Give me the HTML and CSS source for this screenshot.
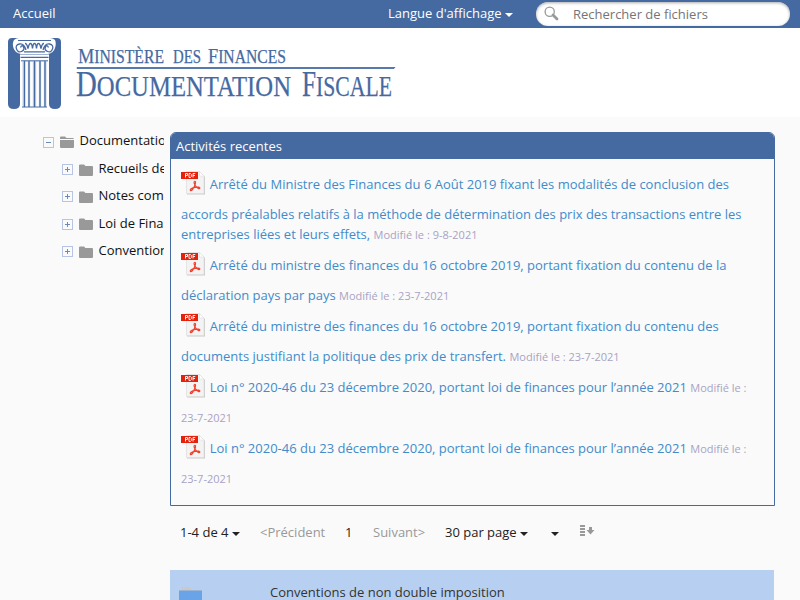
FILE: index.html
```html
<!DOCTYPE html>
<html lang="fr">
<head>
<meta charset="utf-8">
<title>Documentation Fiscale</title>
<link rel="stylesheet" href="styles.css">
</head>
<body>
<svg width="0" height="0" class="defs" aria-hidden="true">
  <symbol id="pdf" viewBox="0 0 24 24">
    <path d="M6 1h13l5 5v17.500H6z" fill="#c9c9c9"/>
    <path d="M5.500.5h13L23 5v17.500H5.500z" fill="#f3f3f3" stroke="#dedede" stroke-width=".8"/>
    <path d="M18.500.5 23 5h-4.500z" fill="#fff" stroke="#ddd" stroke-width=".6"/>
    <path d="M0 1h17v7H0z" fill="#e5200b"/>
    <path d="M4.500 6.500v-4h2v2h-2M8 2.500h1.500l.8.800v2.400l-.8.800H8zM12 6.500v-4h2.300M12 4.500h2" fill="none" stroke="#fff" stroke-width=".9"/>
    <path d="M13.500 10.500c1.500-.3 1.300 2-.2 5-1.300 2.700-2.800 4.600-3.800 4-1-.9 1.300-2.500 4.500-3.100 3-.6 5-.3 4.800.7-.4 1.300-3-.4-4.500-2.600-1.300-2-1.700-3.800-.8-4z" fill="none" stroke="#f0402f" stroke-width="1.200"/>
  </symbol>
  <symbol id="folder" viewBox="0 0 14 12">
    <path d="M0 1.500Q0 .5 1 .5h4l1.500 1.500H13q1 0 1 1V11q0 1-1 1H1q-1 0-1-1z" fill="#999"/>
  </symbol>
</svg>
<header class="topbar">
  <a class="home">Accueil</a>
  <a class="lang">Langue d'affichage<i class="caret"></i></a>
  <div class="search">
    <svg width="16" height="16" viewBox="0 0 16 16"><circle cx="5.700" cy="5.700" r="4.600" fill="none" stroke="#999" stroke-width="1.300"/><path d="M9 9l4 4" stroke="#999" stroke-width="2.800" stroke-linecap="round"/></svg>
    <span>Rechercher de fichiers</span>
  </div>
</header>
<div class="brand">
  <svg width="400" height="89" viewBox="0 0 400 89">
    <path d="M12 10h45q4 0 4 4v62q0 5-6 5t-6-5V26H20v50q0 5-6 5t-6-5V14q0-4 4-4z" fill="#4569a1"/>
    <path d="M20 24h29v9H20z" fill="#fff"/>
    <path d="M22.500 33.500h24v45h-24z" fill="#c5d3e8"/>
    <path d="M26.500 34v45M31.500 34v45M37.500 34v45M42.500 34v45" stroke="#fff" stroke-width="2.600"/>
    <path d="M24.500 33v46M29 33v46M34.500 33v46M40 33v46M45 33v46" stroke="#4569a1" stroke-width="1.300"/>
    <path d="M21 32.800h27M22 79h25" stroke="#4569a1" stroke-width="1"/>
    <path d="M15 10h39l3 4-1 9-6 3.500H20L14 23l-2-9z" fill="#4569a1"/>
    <path d="M14 12q2-2 5-2h31q3 0 5 2 1.500 3 0 8t-7 6H21q-6-1-7.500-6t.5-8z" fill="#fff"/>
    <path d="M18 12.500h33" stroke="#4569a1" stroke-width="1.200"/>
    <path d="M26 22q-2-7-6.500-6t-3 5 5 2.500 2-4.500-3 .5M43 22q2-7 6.500-6t3 5-5 2.500-2-4.500 3 .5" fill="none" stroke="#4569a1" stroke-width="1.300"/>
    <path d="M25 15.500q2 0 3 5 1-5 2.500-5t2 5q.5-5 2-5t2 5q.5-5 2-5t2.500 5q1-5 3-5" fill="none" stroke="#4569a1" stroke-width="1.400"/>
    <path d="M24 23.800h21M20.500 29.300h28" stroke="#4569a1" stroke-width="1.200"/>
    <g class="logo">
      <g class="upper">
        <text x="78" y="35" textLength="86" lengthAdjust="spacingAndGlyphs">M<tspan>INISTÈRE</tspan></text>
        <text x="173" y="35" textLength="28" lengthAdjust="spacingAndGlyphs"><tspan>DES</tspan></text>
        <text x="208" y="35" textLength="78" lengthAdjust="spacingAndGlyphs">F<tspan>INANCES</tspan></text>
      </g>
      <g class="lower">
        <text x="76" y="68" textLength="215" lengthAdjust="spacingAndGlyphs">D<tspan>OCUMENTATION</tspan></text>
        <text x="302" y="68" textLength="90" lengthAdjust="spacingAndGlyphs">F<tspan>ISCALE</tspan></text>
      </g>
    </g>
    <path d="M77 39.500h318l-1 1H77z" fill="#4569a1" stroke="#4569a1" stroke-width=".8"/>
  </svg>
</div>
<div class="layout">
  <nav class="tree">
    <div class="node root"><i class="toggle"></i><svg class="open" width="14" height="12" viewBox="0 0 14 12"><path d="M0 3V1.500Q0 .5 1 .5h4L6.500 2H13q.8 0 .8 1z" fill="#999"/><path d="M0 4h14v7q0 1-1 1H1q-1 0-1-1z" fill="#999"/></svg><span>Documentation</span></div>
    <div class="node"><i class="toggle plus"></i><svg width="14" height="12"><use href="#folder"/></svg><span>Recueils des</span></div>
    <div class="node"><i class="toggle plus"></i><svg width="14" height="12"><use href="#folder"/></svg><span>Notes communes</span></div>
    <div class="node"><i class="toggle plus"></i><svg width="14" height="12"><use href="#folder"/></svg><span>Loi de Finances</span></div>
    <div class="node"><i class="toggle plus"></i><svg width="14" height="12"><use href="#folder"/></svg><span>Conventions</span></div>
  </nav>
  <main>
    <section class="panel">
      <h2>Activités recentes</h2>
      <div class="items">
        <p><svg class="pdf" width="24" height="24"><use href="#pdf"/></svg><a>Arrêté du Ministre des Finances du 6 Août 2019 fixant les modalités de conclusion des<br>accords préalables relatifs à la méthode de détermination des prix des transactions entre les<br>entreprises liées et leurs effets,</a> <small>Modifié le : 9-8-2021</small></p>
        <p><svg class="pdf" width="24" height="24"><use href="#pdf"/></svg><a>Arrêté du ministre des finances du 16 octobre 2019, portant fixation du contenu de la<br>déclaration pays par pays</a> <small>Modifié le : 23-7-2021</small></p>
        <p><svg class="pdf" width="24" height="24"><use href="#pdf"/></svg><a>Arrêté du ministre des finances du 16 octobre 2019, portant fixation du contenu des<br>documents justifiant la politique des prix de transfert.</a> <small>Modifié le : 23-7-2021</small></p>
        <p><svg class="pdf" width="24" height="24"><use href="#pdf"/></svg><a>Loi n° 2020-46 du 23 décembre 2020, portant loi de finances pour l’année 2021</a> <small>Modifié le :<br>23-7-2021</small></p>
        <p><svg class="pdf" width="24" height="24"><use href="#pdf"/></svg><a>Loi n° 2020-46 du 23 décembre 2020, portant loi de finances pour l’année 2021</a> <small>Modifié le :<br>23-7-2021</small></p>
      </div>
    </section>
    <div class="pager">
      <span class="range">1-4 de 4<i class="caret"></i></span>
      <span class="prev">&lt;Précident</span>
      <span class="page">1</span>
      <span class="next">Suivant&gt;</span>
      <span class="size">30 par page<i class="caret"></i></span>
      <i class="caret more"></i>
      <svg class="sort" width="15" height="12" viewBox="0 0 15 12"><path d="M0 1h5M0 4h5M0 7h5M0 10h5" stroke="#999" stroke-width="2"/><path d="M9 2h3v3h2.500l-4 4.500-4-4.500H9z" fill="#999"/></svg>
    </div>
    <div class="row">
      <svg width="24" height="14" viewBox="0 0 24 14"><path d="M2 4q0-3 3-3h5q2 0 3 3h10v2H0V4z" fill="#c9c9c9"/><path d="M0 4.500h23V14H0z" fill="#69a3e8"/></svg>
      <span>Conventions de non double imposition</span>
    </div>
  </main>
</div>
</body>
</html>
```
FILE: styles.css
```css
* { box-sizing: border-box; }
html, body { height: 600px; overflow: hidden; }
body { margin: 0; background: #fafafa; color: #333; font: 13px/20px "Open Sans", "Noto Sans", sans-serif; white-space: nowrap; }
.defs { position: absolute; }
.topbar { display: flex; height: 28px; background: #4569a1; color: #fff; line-height: 26px; padding: 0 10px 0 13px; }
.home { width: 375px; }
.lang { width: 148px; }
.caret { display: inline-block; border: 4px solid transparent; border-top-color: currentColor; border-bottom: 0; margin-left: 3px; vertical-align: 1px; }
.search { display: flex; align-items: center; width: 254px; height: 24px; margin-top: 2px; padding-left: 8px; border-radius: 12px; background: #fff; color: #757575; box-shadow: inset 0 1px 3px #aaa; line-height: 24px; }
.search span { margin-left: 13px; }
.brand { height: 89px; background: #fff; }
.brand svg { display: block; }
.logo { font-family: "Liberation Serif", serif; fill: #4569a1; stroke: #4569a1; stroke-width: .25px; }
.upper { font-size: 21px; }
.upper tspan { font-size: 18px; }
.lower { font-size: 35px; }
.lower tspan { font-size: 30px; }
.layout { display: flex; }
.tree { width: 164px; padding: 10px 0 0 43px; overflow: hidden; color: #111; }
.node { display: flex; align-items: center; height: 27.400px; padding-left: 19px; }
.root { padding-left: 0; }
.root span { margin-top: -2px; }
.node svg { flex: none; margin: 3px 5.500px 0 6px; }
.toggle { flex: none; width: 11px; height: 11px; margin-top: 3px; border: 1px solid #b5c5e3; background: linear-gradient(#6c8ab9, #6c8ab9) center / 5px 1px no-repeat; }
.plus { background: linear-gradient(#6c8ab9, #6c8ab9) center / 5px 1px no-repeat, linear-gradient(#6c8ab9, #6c8ab9) center / 1px 5px no-repeat; }
main { width: 605px; margin-left: 6px; padding-top: 15px; }
.panel { height: 374px; border: 1px solid #4569a1; border-radius: 6px 6px 0 0; overflow: hidden; }
h2 { margin: 0; height: 26px; padding-left: 5px; background: #4569a1; color: #fff; font-size: 13px; line-height: 27px; font-weight: 400; }
.items { padding: 4px 10px; color: #428bca; }
.items p { margin: 0; padding-top: 4px; }
.pdf { vertical-align: middle; margin: 4px 4.700px 9px 0; }
small { font-size: 11px; line-height: 1; color: #a9a3c4; }
.pager { display: flex; align-items: center; height: 20px; margin: 16px 0 28px 10px; color: #222; }
.range { width: 80px; }
.prev { width: 85px; color: #999; }
.page { width: 28px; }
.next { width: 72px; color: #999; }
.size { width: 106px; }
.more { margin: 3px 0 0; }
.sort { margin: -2px 0 0 21px; }
.row { display: flex; width: 604px; height: 30px; padding: 12px 0 0 9px; background: #b7d0f2; color: #333; }
.row svg { margin-top: 4px; }
.row span { margin-left: 67px; }
```
